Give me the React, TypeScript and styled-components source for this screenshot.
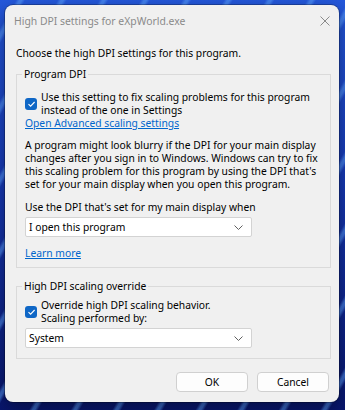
import styled, { createGlobalStyle } from 'styled-components';

const GlobalStyle = createGlobalStyle`
  html, body {
    margin: 0;
    padding: 0;
  }
  body {
    width: 345px;
    height: 410px;
    overflow: hidden;
    font-family: "Noto Sans", "Open Sans", sans-serif;
    background:
      repeating-linear-gradient(120deg, rgba(90, 160, 255, 0) 0 14px, rgba(90, 160, 255, 0.55) 17px 19px, rgba(90, 160, 255, 0) 22px 36px),
      linear-gradient(180deg, #2458dc 0%, #1638b4 45%, #08166e 100%);
  }
`;

const Page = styled.div`
  box-sizing: border-box;
  height: 410px;
  padding: 5px 6px 8px 5px;
`;

const Window = styled.div`
  width: 334px;
  height: 397px;
  display: flex;
  flex-direction: column;
  background: #f0f0f0;
  border-radius: 8px;
  box-shadow: 0 0 0 1px rgba(0, 0, 0, 0.25), 0 6px 18px rgba(0, 0, 0, 0.4);
  overflow: hidden;
`;

const TitleBar = styled.div`
  height: 32px;
  flex: none;
  display: flex;
  align-items: center;
  justify-content: space-between;
  padding: 0 9px;
  color: #8a8a8a;
  font-size: 10.4px;
`;

const Content = styled.div`
  display: flex;
  flex-direction: column;
  padding: 0 8px 0 11px;
  font-size: 10.3px;
  line-height: 13px;
  color: #000;
`;

const Intro = styled.div`
  margin-top: 10px;
  white-space: nowrap;
`;

const Group = styled.fieldset<{ $top: number; $padTop: number; $padBottom: number }>`
  margin: ${(p) => p.$top}px 0 0;
  padding: ${(p) => p.$padTop}px 8px ${(p) => p.$padBottom}px 8px;
  border: 1px solid #dadada;
  min-inline-size: 0;
  display: flex;
  flex-direction: column;
  align-items: flex-start;
`;

const Legend = styled.legend`
  padding: 0 2px;
  margin-left: -3px;
  line-height: 13px;
`;

const CheckRow = styled.label`
  display: flex;
  align-items: center;
  gap: 4px;
  white-space: nowrap;
`;

const Box = styled.span`
  width: 12px;
  height: 12px;
  flex: none;
  border-radius: 3px;
  background: #0f67c6;
  display: flex;
  align-items: center;
  justify-content: center;
`;

const Link = styled.a<{ $top?: number }>`
  margin-top: ${(p) => p.$top ?? 0}px;
  color: #0066cc;
  text-decoration: underline;
  white-space: nowrap;
`;

const Para = styled.p<{ $top: number }>`
  margin: ${(p) => p.$top}px 0 0;
  white-space: nowrap;
`;

const Select = styled.div`
  box-sizing: border-box;
  margin-top: 3px;
  width: 227px;
  height: 20px;
  display: flex;
  align-items: center;
  justify-content: space-between;
  padding: 0 8px 0 3px;
  background: #fff;
  border: 1px solid #d3d3d3;
  border-radius: 2px;
`;

const ButtonRow = styled.div`
  display: flex;
  justify-content: flex-end;
  gap: 9px;
  margin-top: 13px;
  padding-right: 2px;
`;

const Button = styled.button`
  box-sizing: border-box;
  width: 72px;
  height: 20px;
  padding: 0;
  font-family: inherit;
  font-size: 10.3px;
  color: #000;
  background: #fdfdfd;
  border: 1px solid #d0d0d0;
  border-radius: 4px;
`;

const Check = () => (
  <svg width="9" height="8" viewBox="0 0 9 8">
    <path d="M1.5 4.2 L3.6 6.2 L7.6 2" fill="none" stroke="#fff" strokeWidth="1.1" />
  </svg>
);

const Chevron = () => (
  <svg width="9" height="5" viewBox="0 0 9 5">
    <path d="M0.5 0.5 L4.5 4.5 L8.5 0.5" fill="none" stroke="#606060" strokeWidth="1" />
  </svg>
);

const CloseIcon = () => (
  <svg width="10" height="10" viewBox="0 0 10 10">
    <path d="M0.5 0.5 L9.5 9.5 M9.5 0.5 L0.5 9.5" stroke="#8a8a8a" strokeWidth="1" />
  </svg>
);

export default function App() {
  return (
    <Page>
      <GlobalStyle />
      <Window>
        <TitleBar>
          <span>High DPI settings for eXpWorld.exe</span>
          <CloseIcon />
        </TitleBar>
        <Content>
          <Intro>Choose the high DPI settings for this program.</Intro>

          <Group $top={8} $padTop={10} $padBottom={7}>
            <Legend>Program DPI</Legend>
            <CheckRow>
              <Box><Check /></Box>
              <span>
                Use this setting to fix scaling problems for this program
                <br />
                instead of the one in Settings
              </span>
            </CheckRow>
            <Link>Open Advanced scaling settings</Link>
            <Para $top={9}>
              A program might look blurry if the DPI for your main display
              <br />
              changes after you sign in to Windows. Windows can try to fix
              <br />
              this scaling problem for this program by using the DPI that's
              <br />
              set for your main display when you open this program.
            </Para>
            <Para $top={10}>Use the DPI that's set for my main display when</Para>
            <Select>
              <span>I open this program</span>
              <Chevron />
            </Select>
            <Link $top={10}>Learn more</Link>
          </Group>

          <Group $top={12} $padTop={6} $padBottom={10}>
            <Legend>High DPI scaling override</Legend>
            <CheckRow>
              <Box><Check /></Box>
              <span>
                Override high DPI scaling behavior.
                <br />
                Scaling performed by:
              </span>
            </CheckRow>
            <Select>
              <span>System</span>
              <Chevron />
            </Select>
          </Group>

          <ButtonRow>
            <Button>OK</Button>
            <Button>Cancel</Button>
          </ButtonRow>
        </Content>
      </Window>
    </Page>
  );
}
